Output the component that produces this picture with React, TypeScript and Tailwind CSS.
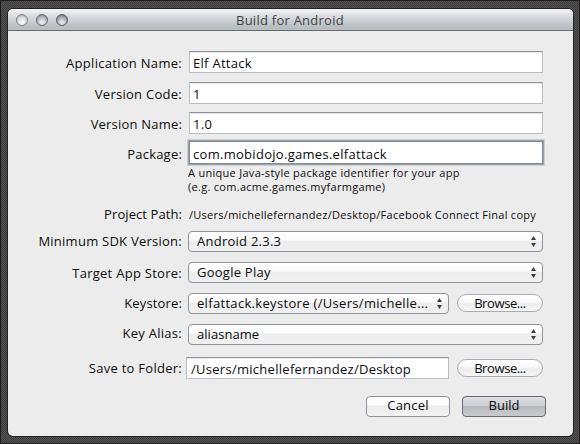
import type { ReactNode } from "react";

function Row({ label, pad, height, tracking = "tracking-[0.27px]", children }: { label: string; pad: string; height: string; tracking?: string; children: ReactNode }) {
  return (
    <div className={`flex items-start ${height}`}>
      <div className={`w-[174px] shrink-0 text-right ${pad} ${tracking}`}>{label}</div>
      {children}
    </div>
  );
}

function Field({ children, className = "ml-[7px] w-[354px] pl-[3px]", tracking = "tracking-[0.28px]" }: { children: ReactNode; className?: string; tracking?: string }) {
  return (
    <div className={`h-[22px] shrink-0 border border-[#b9bcc0] border-t-[#8f949c] bg-white pt-[2px] shadow-[inset_0_1px_0_#e6e7e9] ${className} ${tracking}`}>{children}</div>
  );
}

function Select({ children, width = "w-[355px]", tracking = "tracking-[0.25px]" }: { children: ReactNode; width?: string; tracking?: string }) {
  return (
    <div className={`ml-[6px] flex h-[21px] shrink-0 justify-between rounded-[4px] border border-[#8f949c] bg-[linear-gradient(#ffffff_0%,#fbfbfb_40%,#ededed_50%,#f0f0f0_100%)] pr-[5px] pl-[8px] ${width} ${tracking}`}>
      <span>{children}</span>
      <svg className="mt-[4px]" width="7" height="12" viewBox="0 0 7 12" fill="#3d3d3d">
        <path d="M3.5 0L6 4H1zM3.5 11L6 7H1z" />
      </svg>
    </div>
  );
}

function Browse({ top }: { top: string }) {
  return (
    <button className={`ml-2 h-[18px] w-[86px] shrink-0 rounded-full border border-[#a9adb3] bg-[linear-gradient(#ffffff,#f8f8f8_45%,#ededed_55%,#f6f6f6)] leading-[16px] tracking-[-0.4px] ${top}`}>Browse...</button>
  );
}

const lights = [
  { id: "close", tone: "border-[#7f8388] bg-[radial-gradient(circle_at_50%_75%,#f4f4f4_15%,#d9dbde_55%,#a0a4a8)]" },
  { id: "minimize", tone: "border-[#5f6367] bg-[radial-gradient(circle_at_50%_75%,#e6e7e8_15%,#b9bdc1_55%,#7d8185)]" },
  { id: "zoom", tone: "border-[#55585c] bg-[radial-gradient(circle_at_50%_75%,#e0e1e2_15%,#a9adb1_55%,#6c7074)]" },
];

export default function App() {
  return (
    <div className="h-[444px] w-[580px] overflow-hidden border border-[#201c1e] bg-[#454445] bg-[conic-gradient(#565556_25%,#3b3a3b_0_50%,#565556_0_75%,#3b3a3b_0)] bg-size-[2px_2px] pt-[8px] pl-[7px] font-['Open_Sans','Noto_Sans',sans-serif] text-[13px] leading-[18px] text-[#0c0c0c]">
      <div className="h-[427px] w-[565px] rounded-[5px] bg-[#ececec] shadow-[0_0_0_1px_#242324]">
        <header className="flex h-[22px] rounded-t-[5px] border-b border-[#686b6e] bg-[linear-gradient(#f4f4f5,#d9dbe0_35%,#b9bec2_85%)] pl-[8px]">
          <div className="flex gap-[8px] pt-[5px]">
            {lights.map((light) => (
              <i key={light.id} className={`block size-[12px] rounded-full border ${light.tone}`} />
            ))}
          </div>
          <h1 className="ml-[168px] pt-[2px] tracking-[0.25px] text-[#3f4144]">Build for Android</h1>
        </header>
        <main className="pt-[20px]">
          <Row label="Application Name:" pad="pt-[3px]" height="h-[31px]" tracking="tracking-[0.29px]"><Field>Elf Attack</Field></Row>
          <Row label="Version Code:" pad="pt-[3px]" height="h-[30px]"><Field>1</Field></Row>
          <Row label="Version Name:" pad="pt-[3px]" height="h-[29px]" tracking="tracking-[0.2px]"><Field>1.0</Field></Row>
          <Row label="Package:" pad="pt-[4px]" height="h-[25px]" tracking="tracking-[0.2px]">
            <div className="ml-[7px] h-[23px] w-[354px] border border-[#858b93] bg-white pt-[3px] pl-[3px] tracking-[0.29px] shadow-[0_0_0_1px_#9ba1a8,0_0_0_2px_#cdd1d6]">com.mobidojo.games.elfattack</div>
          </Row>
          <p className="ml-[180px] h-[39px] text-[11px] leading-[14px] tracking-[0.29px]">A unique Java-style package identifier for your app<br />(e.g. com.acme.games.myfarmgame)</p>
          <Row label="Project Path:" pad="pt-0" height="h-[26px]" tracking="tracking-[0.08px]"><span className="ml-[7px] pt-px text-[11px] tracking-[0.27px]">/Users/michellefernandez/Desktop/Facebook Connect Final copy</span></Row>
          <Row label="Minimum SDK Version:" pad="pt-px" height="h-[31px]" tracking="tracking-[0.25px]"><Select>Android 2.3.3</Select></Row>
          <Row label="Target App Store:" pad="pt-[2px]" height="h-[31px]"><Select>Google Play</Select></Row>
          <Row label="Keystore:" pad="pt-px" height="h-[31px]" tracking="tracking-[0.15px]"><Select width="w-[261px]" tracking="tracking-[0.32px]">elfattack.keystore (/Users/michelle...</Select><Browse top="mt-px" /></Row>
          <Row label="Key Alias:" pad="pt-0" height="h-[33px]"><Select tracking="tracking-[0.05px]">aliasname</Select></Row>
          <Row label="Save to Folder:" pad="pt-[2px]" height="h-[39px]"><Field className="ml-[4px] w-[263px] pl-[4px]">/Users/michellefernandez/Desktop</Field><Browse top="mt-[2px]" /></Row>
          <div className="ml-[358px] flex gap-[12px]">
            <button className="h-[21px] w-[84px] rounded-[4px] border border-[#8f949c] bg-[linear-gradient(#ffffff,#fbfbfb_40%,#ededed_50%,#f2f2f2)] pb-[2px] leading-[17px] tracking-[0.2px]">Cancel</button>
            <button className="h-[21px] w-[84px] rounded-[4px] border border-[#666a6f] bg-[linear-gradient(#dcdee1,#cdd0d4_45%,#b5b9be_50%,#c9cccf)] pb-[2px] leading-[17px]">Build</button>
          </div>
        </main>
      </div>
    </div>
  );
}
